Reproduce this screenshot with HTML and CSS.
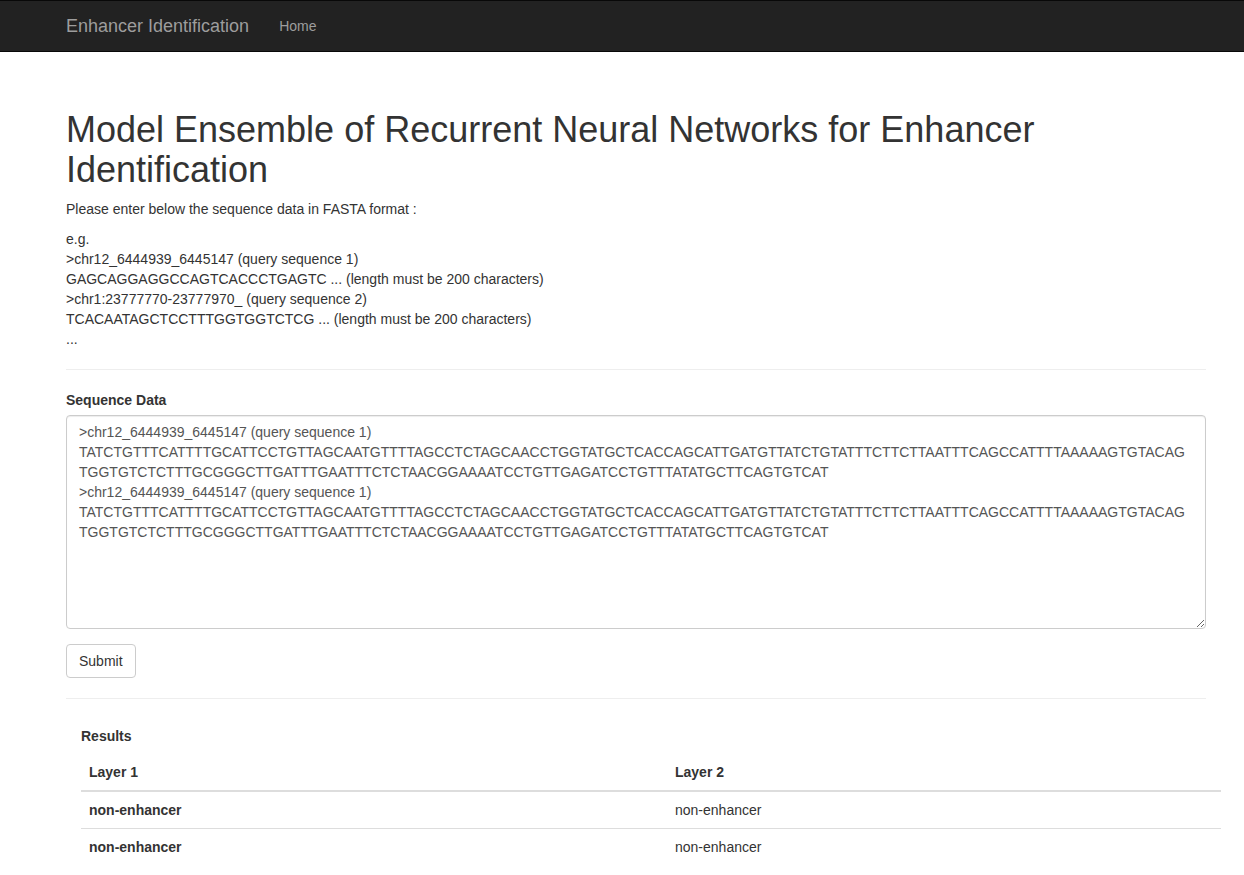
FILE: index.html
```html
<!DOCTYPE html>
<html lang="en">
<head>
<meta charset="utf-8">
<title>Enhancer Identification</title>
<link rel="stylesheet" href="styles.css">
</head>
<body>
<nav class="navbar">
  <div class="container nav-inner">
    <a class="brand" href="#">Enhancer Identification</a>
    <a class="nav-link" href="#">Home</a>
  </div>
</nav>
<main class="container">
  <h1 class="title">Model Ensemble of Recurrent Neural Networks for Enhancer Identification</h1>
  <p class="para">Please enter below the sequence data in FASTA format :</p>
  <p class="para">e.g.<br>&gt;chr12_6444939_6445147 (query sequence 1)<br>GAGCAGGAGGCCAGTCACCCTGAGTC ... (length must be 200 characters)<br>&gt;chr1:23777770-23777970_ (query sequence 2)<br>TCACAATAGCTCCTTTGGTGGTCTCG ... (length must be 200 characters)<br>...</p>
  <hr class="rule">
  <form class="form">
    <div class="form-group">
      <label class="label" for="seq">Sequence Data</label>
      <textarea id="seq" class="textarea" rows="10">&gt;chr12_6444939_6445147 (query sequence 1)
TATCTGTTTCATTTTGCATTCCTGTTAGCAATGTTTTAGCCTCTAGCAACCTGGTATGCTCACCAGCATTGATGTTATCTGTATTTCTTCTTAATTTCAGCCATTTTAAAAAGTGTACAG
TGGTGTCTCTTTGCGGGCTTGATTTGAATTTCTCTAACGGAAAATCCTGTTGAGATCCTGTTTATATGCTTCAGTGTCAT
&gt;chr12_6444939_6445147 (query sequence 1)
TATCTGTTTCATTTTGCATTCCTGTTAGCAATGTTTTAGCCTCTAGCAACCTGGTATGCTCACCAGCATTGATGTTATCTGTATTTCTTCTTAATTTCAGCCATTTTAAAAAGTGTACAG
TGGTGTCTCTTTGCGGGCTTGATTTGAATTTCTCTAACGGAAAATCCTGTTGAGATCCTGTTTATATGCTTCAGTGTCAT</textarea>
    </div>
    <button type="button" class="btn">Submit</button>
  </form>
  <hr class="rule">
  <section class="results">
    <div class="results-title">Results</div>
    <table class="table">
      <colgroup><col class="col-1"><col></colgroup>
      <thead>
        <tr><th>Layer 1</th><th>Layer 2</th></tr>
      </thead>
      <tbody>
        <tr><th>non-enhancer</th><td>non-enhancer</td></tr>
        <tr><th>non-enhancer</th><td>non-enhancer</td></tr>
      </tbody>
    </table>
  </section>
</main>
</body>
</html>
```
FILE: styles.css
```css
* { box-sizing: border-box; }
html, body { margin: 0; padding: 0; }
body {
  font-family: "Liberation Sans", Arial, Helvetica, sans-serif;
  font-size: 14px;
  line-height: 1.42857143;
  color: #333;
  background: #fff;
}
.container {
  margin: 0 38px 0 66px;
}
.navbar {
  background: #222;
  border-top: 1px solid #080808;
  border-bottom: 1px solid #080808;
}
.nav-inner {
  display: flex;
  align-items: center;
  height: 50px;
}
.brand {
  font-size: 18px;
  line-height: 20px;
  color: #9d9d9d;
  text-decoration: none;
  padding: 15px 15px 15px 0;
}
.nav-link {
  font-size: 14px;
  line-height: 20px;
  color: #9d9d9d;
  text-decoration: none;
  padding: 15px;
}
.title {
  font-size: 36px;
  font-weight: 500;
  line-height: 1.1;
  margin: 58px 0 10px;
  color: #333;
}
.para {
  margin: 0 0 10px;
}
.rule {
  margin: 20px 0;
  border: 0;
  border-top: 1px solid #eee;
  height: 0;
}
.form { margin: 0; }
.form-group { margin-bottom: 15px; }
.label {
  display: inline-block;
  font-weight: bold;
  margin-bottom: 5px;
}
.textarea {
  display: block;
  width: 100%;
  padding: 6px 12px;
  font-family: inherit;
  font-size: 14px;
  line-height: 1.42857143;
  color: #555;
  background: #fff;
  border: 1px solid #ccc;
  border-radius: 4px;
  box-shadow: inset 0 1px 1px rgba(0,0,0,.075);
  resize: vertical;
  white-space: pre-wrap;
}
.btn {
  display: inline-block;
  padding: 6px 12px;
  font-family: inherit;
  font-size: 14px;
  line-height: 1.42857143;
  color: #333;
  background: #fff;
  border: 1px solid #ccc;
  border-radius: 4px;
  cursor: pointer;
}
.results {
  margin: 0 -15px 0 15px;
  padding-top: 7px;
}
.results-title {
  font-weight: bold;
  margin-bottom: 8px;
}
.table {
  width: 100%;
  border-collapse: collapse;
  border-spacing: 0;
}
.col-1 { width: 586px; }
.table th, .table td {
  padding: 8px;
  text-align: left;
  line-height: 1.42857143;
  vertical-align: top;
  border-top: 1px solid #ddd;
}
.table thead th {
  border-top: 0;
  border-bottom: 2px solid #ddd;
  vertical-align: bottom;
}
.table tbody th { font-weight: bold; }
```
